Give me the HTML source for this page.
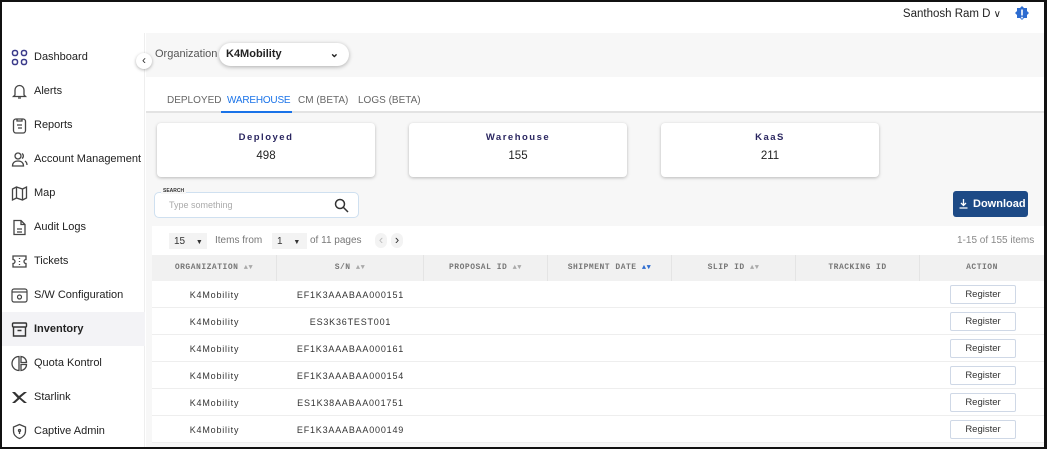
<!DOCTYPE html>
<html><head><style>
*{box-sizing:border-box;margin:0;padding:0}
body{width:1047px;height:449px;overflow:hidden;font-family:"Liberation Sans",sans-serif;background:#fff;position:relative}
.frame{position:absolute;left:0;top:0;width:1047px;height:449px;border:2px solid #111;border-right-width:3px;z-index:10;pointer-events:none}
.abs{position:absolute}
.side{left:2px;top:33px;width:143px;height:416px;background:#fff;border-right:1px solid #eee}
.item{position:absolute;left:0;width:143px;height:34px;display:flex;align-items:center;font-size:11px;color:#222;white-space:nowrap}
.item svg{position:absolute;left:9px;width:17px;height:17px}
.item span{position:absolute;left:32px;top:11px}
.main{left:146px;top:33px;width:898px;height:416px;background:#f7f7f7}
.tab{position:absolute;top:95px;font-size:10px;color:#666}
.card{position:absolute;top:123px;height:54px;width:218px;background:#fff;border-radius:4px;box-shadow:0 1px 3px rgba(0,0,0,.25);text-align:center}
.card b{display:block;margin-top:9px;font-size:9.5px;letter-spacing:1.5px;color:#2a2660}
.card i{display:block;font-style:normal;font-size:11.5px;margin-top:7px;color:#222}
.th{position:absolute;top:255px;height:26px;line-height:26px;font-family:"Liberation Mono",monospace;font-size:8px;font-weight:bold;color:#777;text-align:center;border-right:1px solid #e4e4e4;letter-spacing:.5px}
.row{position:absolute;left:152px;width:892px;height:27px;border-bottom:1px solid #eee;background:#fff;font-size:9px;letter-spacing:.8px;color:#333}
.row .o{position:absolute;left:0;width:125px;text-align:center;top:9px}
.row .s{position:absolute;left:125px;width:147px;text-align:center;top:9px}
.row .r{position:absolute;left:798px;top:4px;width:66px;height:19px;border:1px solid #cfd8e6;border-radius:2px;font-size:9.5px;letter-spacing:0;text-align:center;line-height:17px;color:#333}
.sort{color:#aaa;font-size:7px}
</style></head><body>
<div class="frame"></div>
<div class="abs" style="right:46px;top:8px;font-size:11.5px;color:#222">Santhosh Ram D <span style="font-size:10px">&#8744;</span></div>
<svg class="abs" style="left:1014px;top:6px" width="16" height="16" viewBox="0 0 16 16"><path d="M8 0l2 2 3 0 0 3 2 2-2 2 0 3-3 0-2 2-2-2-3 0 0-3-2-2 2-2 0-3 3 0z" fill="#2d6cd0"/><rect x="7.2" y="3.5" width="1.6" height="6" fill="#fff"/><rect x="7.2" y="10.8" width="1.6" height="1.6" fill="#fff"/></svg>

<div class="abs side">
 <div class="item" style="top:7px"><svg viewBox="0 0 17 17" fill="none" stroke="#3a3a8a" stroke-width="1.5"><rect x="1.5" y="1.5" width="5" height="5" rx="2"/><rect x="10.5" y="1.5" width="5" height="5" rx="2"/><rect x="1.5" y="10.5" width="5" height="5" rx="2"/><rect x="10.5" y="10.5" width="5" height="5" rx="2"/></svg><span>Dashboard</span></div>
 <div class="item" style="top:41px"><svg viewBox="0 0 17 17" fill="none" stroke="#444" stroke-width="1.3"><path d="M4 12V7a4.5 4.5 0 019 0v5l1.5 1.5h-12z M7 15h3"/></svg><span>Alerts</span></div>
 <div class="item" style="top:75px"><svg viewBox="0 0 17 17" fill="none" stroke="#444" stroke-width="1.3"><rect x="2.5" y="2" width="12" height="14" rx="2.5"/><path d="M6 2v2h5V2M6 8h5M7 11h4"/></svg><span>Reports</span></div>
 <div class="item" style="top:109px"><svg viewBox="0 0 17 17" fill="none" stroke="#444" stroke-width="1.3"><circle cx="7" cy="5" r="3"/><path d="M1.5 15c0-4 3-5 5.5-5s5.5 1 5.5 5zM11 2.5a3 3 0 010 5M14 10c1.5 1 2 2.5 2 4"/></svg><span>Account Management</span></div>
 <div class="item" style="top:143px"><svg viewBox="0 0 17 17" fill="none" stroke="#444" stroke-width="1.3"><path d="M1.5 4l4-2 6 2 4-2v11l-4 2-6-2-4 2zM5.5 2v11M11.5 4v11"/></svg><span>Map</span></div>
 <div class="item" style="top:177px"><svg viewBox="0 0 17 17" fill="none" stroke="#444" stroke-width="1.3"><path d="M3 1.5h7l4 4v10H3zM10 1.5v4h4M6 10h5M6 13h5"/></svg><span>Audit Logs</span></div>
 <div class="item" style="top:211px"><svg viewBox="0 0 17 17" fill="none" stroke="#444" stroke-width="1.3"><path d="M2 3h13v3.5a2 2 0 000 4V14H2v-3.5a2 2 0 000-4z M8.5 5v1M8.5 8v1M8.5 11v1"/></svg><span>Tickets</span></div>
 <div class="item" style="top:245px"><svg viewBox="0 0 17 17" fill="none" stroke="#444" stroke-width="1.2"><rect x="1" y="2" width="15" height="13" rx="2"/><path d="M1 5h15"/><circle cx="8.5" cy="10" r="2"/></svg><span>S/W Configuration</span></div>
 <div class="item" style="top:279px;background:#f3f3f6"><svg viewBox="0 0 17 17" fill="none" stroke="#333" stroke-width="1.4"><rect x="1.5" y="2" width="14" height="4" rx="1"/><path d="M2.5 6v9h12V6M6.5 9.5h4"/></svg><span style="font-weight:bold">Inventory</span></div>
 <div class="item" style="top:313px"><svg viewBox="0 0 17 17" fill="none" stroke="#444" stroke-width="1.3"><path d="M8 1.5a7 7 0 100 14zM10 1.5a6 6 0 015.5 6H10zM10 9.5h5.5A6 6 0 0110 15.5z"/></svg><span>Quota Kontrol</span></div>
 <div class="item" style="top:347px"><svg viewBox="0 0 17 17" fill="#333"><path d="M1 3h3l4 4 5-4h3l-6.5 5.5L16 14h-3L8.5 10 4 14H1l5.5-5z"/></svg><span>Starlink</span></div>
 <div class="item" style="top:381px"><svg viewBox="0 0 17 17" fill="none" stroke="#444" stroke-width="1.3"><path d="M8.5 1.5l6 2.5v4c0 4-3 6.5-6 7.5-3-1-6-3.5-6-7.5V4z"/><circle cx="8.5" cy="7.5" r="1"/><path d="M8.5 8.5v2.5"/></svg><span>Captive Admin</span></div>
</div>

<div class="abs main"></div>
<div class="abs" style="left:136px;top:53px;width:16px;height:16px;border-radius:50%;background:#fff;box-shadow:0 1px 3px rgba(0,0,0,.3);font-size:12px;text-align:center;line-height:15px;color:#333">&#8249;</div>
<div class="abs" style="left:155px;top:48px;font-size:11px;color:#555">Organization</div>
<div class="abs" style="left:219px;top:43px;width:130px;height:23px;background:#fff;border-radius:12px;box-shadow:0 1px 4px rgba(0,0,0,.3);font-size:11px;font-weight:bold;color:#222;line-height:23px;padding-left:7px">K4Mobility<span style="position:absolute;right:10px;top:0;font-weight:bold">&#8964;</span></div>

<div class="abs" style="left:146px;top:77px;width:898px;height:36px;background:#fff;border-bottom:2px solid #e3e3e3"></div>
<div class="tab" style="left:167px">DEPLOYED</div>
<div class="tab" style="left:227px;color:#1a73e8;letter-spacing:-.2px">WAREHOUSE</div>
<div class="abs" style="left:221px;top:111px;width:71px;height:2px;background:#1a73e8"></div>
<div class="tab" style="left:298px">CM (BETA)</div>
<div class="tab" style="left:358px">LOGS (BETA)</div>

<div class="card" style="left:157px"><b>Deployed</b><i>498</i></div>
<div class="card" style="left:409px"><b>Warehouse</b><i>155</i></div>
<div class="card" style="left:661px"><b>KaaS</b><i>211</i></div>

<div class="abs" style="left:154px;top:192px;width:205px;height:26px;background:#fff;border:1px solid #cfe0f0;border-radius:5px"></div>
<div class="abs" style="left:161px;top:188px;font-size:5px;font-weight:bold;color:#333;background:#f7f7f7;padding:0 2px">SEARCH</div>
<div class="abs" style="left:169px;top:200px;font-size:9px;color:#aaa">Type something</div>
<svg class="abs" style="left:334px;top:198px" width="15" height="15" viewBox="0 0 15 15" fill="none" stroke="#333" stroke-width="1.5"><circle cx="6" cy="6" r="4.5"/><path d="M9.5 9.5l4.5 4.5"/></svg>

<div class="abs" style="left:953px;top:191px;width:75px;height:26px;background:#1d4a86;border-radius:3px;color:#fff;font-size:11px;font-weight:bold;line-height:26px;padding-left:6px">
<svg style="position:absolute;left:6px;top:8px" width="9" height="10" viewBox="0 0 9 10" fill="none" stroke="#fff" stroke-width="1.3"><path d="M4.5 0v6M2 4l2.5 2.5L7 4M0.5 9h8"/></svg><span style="position:absolute;left:20px">Download</span></div>

<div class="abs" style="left:152px;top:226px;width:892px;height:29px;background:#fff"></div>
<div class="abs" style="left:169px;top:233px;width:38px;height:16px;background:#f3f3f3;font-size:10px;line-height:18px;padding-left:5px;color:#333">15 <span style="font-size:7px;margin-left:8px">&#9660;</span></div>
<div class="abs" style="left:215px;top:235px;font-size:10px;color:#777">Items from</div>
<div class="abs" style="left:272px;top:233px;width:35px;height:16px;background:#f3f3f3;font-size:10px;line-height:18px;padding-left:5px;color:#333">1 <span style="font-size:7px;margin-left:8px">&#9660;</span></div>
<div class="abs" style="left:310px;top:235px;font-size:10px;color:#777">of 11 pages</div>
<div class="abs" style="left:375px;top:233px;width:12px;height:15px;border-radius:6px;background:#f3f3f3;font-size:13px;line-height:14px;color:#bbb;text-align:center">&#8249;</div>
<div class="abs" style="left:391px;top:233px;width:12px;height:15px;border-radius:6px;background:#f3f3f3;font-size:13px;line-height:14px;color:#333;text-align:center">&#8250;</div>
<div class="abs" style="left:957px;top:235px;font-size:10px;color:#888">1-15 of 155 items</div>

<div class="abs" style="left:152px;top:255px;width:892px;height:26px;background:#f1f1f1"></div>
<div class="th" style="left:152px;width:125px">ORGANIZATION <span class="sort">&#9650;&#9660;</span></div>
<div class="th" style="left:277px;width:147px">S/N <span class="sort">&#9650;&#9660;</span></div>
<div class="th" style="left:424px;width:124px">PROPOSAL ID <span class="sort">&#9650;&#9660;</span></div>
<div class="th" style="left:548px;width:124px">SHIPMENT DATE <span class="sort" style="color:#2d6cd0">&#9650;&#9660;</span></div>
<div class="th" style="left:672px;width:124px">SLIP ID <span class="sort">&#9650;&#9660;</span></div>
<div class="th" style="left:796px;width:124px">TRACKING ID</div>
<div class="th" style="left:920px;width:124px;border-right:0">ACTION</div>

<div class="row" style="top:281px"><div class="o">K4Mobility</div><div class="s">EF1K3AAABAA000151</div><div class="r">Register</div></div>
<div class="row" style="top:308px"><div class="o">K4Mobility</div><div class="s">ES3K36TEST001</div><div class="r">Register</div></div>
<div class="row" style="top:335px"><div class="o">K4Mobility</div><div class="s">EF1K3AAABAA000161</div><div class="r">Register</div></div>
<div class="row" style="top:362px"><div class="o">K4Mobility</div><div class="s">EF1K3AAABAA000154</div><div class="r">Register</div></div>
<div class="row" style="top:389px"><div class="o">K4Mobility</div><div class="s">ES1K38AABAA001751</div><div class="r">Register</div></div>
<div class="row" style="top:416px"><div class="o">K4Mobility</div><div class="s">EF1K3AAABAA000149</div><div class="r">Register</div></div>
</body></html>
